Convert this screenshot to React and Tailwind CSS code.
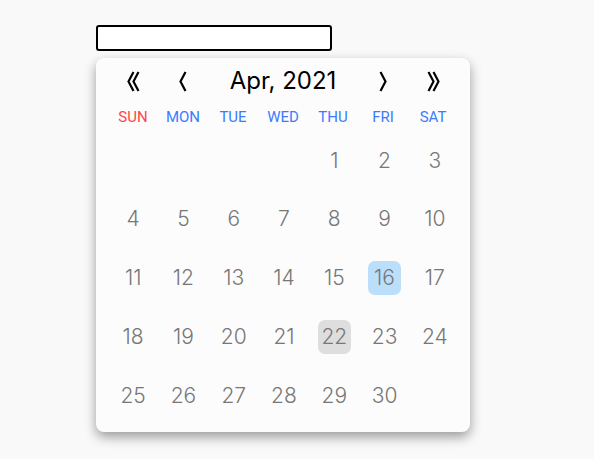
const WEEKDAYS = ["SUN", "MON", "TUE", "WED", "THU", "FRI", "SAT"];

// April 2021 starts on a Thursday
const LEAD = 4;
const DAYS_IN_MONTH = 30;
const SELECTED = 16;
const TODAY = 22;

function Chevron({ dir = "left", double = false }) {
  const path = dir === "left" ? "M6.5 0.5 L1.5 10 L6.5 19.5" : "M1.5 0.5 L6.5 10 L1.5 19.5";
  return (
    <svg
      width={double ? 13 : 8}
      height="21"
      viewBox={double ? "0 0 13 20" : "0 0 8 20"}
      fill="none"
      stroke="#000"
      strokeWidth="2.2"
    >
      <path d={path} />
      {double && <path d={path} transform="translate(5 0)" />}
    </svg>
  );
}

function NavButton({ children }) {
  return (
    <button className="flex items-center justify-center h-full cursor-pointer">
      {children}
    </button>
  );
}

function DayCell({ day }) {
  if (!day) return <div />;
  const isSelected = day === SELECTED;
  const isToday = day === TODAY;
  return (
    <div className="flex items-center justify-center">
      <span
        className={`flex items-center justify-center w-[33px] h-[34px] rounded-[7px] font-['Inter',sans-serif] text-[21px] font-light text-[#777] ${
          isSelected ? "bg-[#bbdefb]" : isToday ? "bg-[#dedede]" : ""
        }`}
      >
        {day}
      </span>
    </div>
  );
}

export default function App() {
  const cells = [
    ...Array(LEAD).fill(null),
    ...Array.from({ length: DAYS_IN_MONTH }, (_, i) => i + 1),
  ];

  return (
    <div
      className="min-h-[459px] bg-[#f9f9f9] pt-[25px] pl-[96px]"
      style={{ fontFamily: "Roboto, 'Liberation Sans', sans-serif" }}
    >
      <input
        type="text"
        className="block w-[236px] h-[26px] bg-white border-2 border-black rounded-[3px] outline-none"
      />

      <div className="mt-[7px] w-[374px] h-[374px] pl-3 pt-[5px] rounded-lg bg-[#fcfcfc] shadow-[0_5px_12px_rgba(0,0,0,0.38)]">
        <div className="grid grid-cols-7 w-[350px] h-9 items-center">
          <NavButton>
            <Chevron dir="left" double />
          </NavButton>
          <NavButton>
            <Chevron dir="left" />
          </NavButton>
          <div className="col-span-3 text-center font-['Inter',sans-serif] text-[24px] text-black">
            Apr, 2021
          </div>
          <NavButton>
            <Chevron dir="right" />
          </NavButton>
          <NavButton>
            <Chevron dir="right" double />
          </NavButton>
        </div>

        <div className="grid grid-cols-7 w-[350px] mt-[5px] h-[26px] items-center">
          {WEEKDAYS.map((d, i) => (
            <div
              key={d}
              className={`text-center text-[15px] ${
                i === 0 ? "text-[#ff4545]" : "text-[#3b7bff]"
              }`}
            >
              {d}
            </div>
          ))}
        </div>

        <div className="grid grid-cols-7 w-[352px] auto-rows-[58.75px] mt-[1px]">
          {cells.map((day, i) => (
            <DayCell key={i} day={day} />
          ))}
        </div>
      </div>
    </div>
  );
}
